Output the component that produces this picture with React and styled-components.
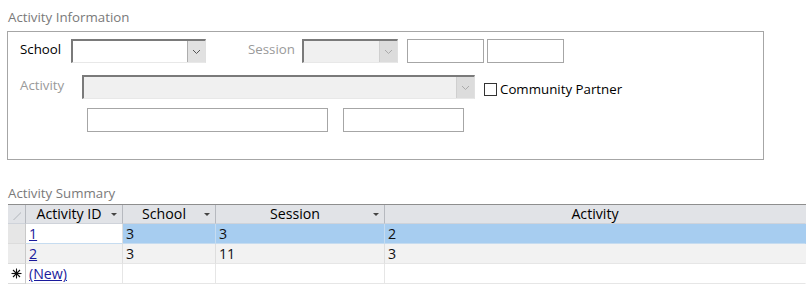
import React from "react";
import styled, { createGlobalStyle } from "styled-components";

const Global = createGlobalStyle`
  html, body { margin: 0; padding: 0; background: #fff; }
  body { font-family: "Open Sans", "Noto Sans", sans-serif; font-size: 13.3px; color: #000; }
  #root { width: 806px; height: 288px; overflow: hidden; }
`;

const Page = styled.div`
  display: flex;
  flex-direction: column;
  padding: 8px 0 0 0;
`;

const SectionTitle = styled.div`
  color: #7a7a7a;
  font-size: 13.3px;
  line-height: 18px;
  padding-left: 8px;
  height: 18px;
`;

const Frame = styled.div`
  margin: 5px 0 0 7px;
  width: 757px;
  height: 129px;
  border: 1px solid #a6a6a6;
  box-sizing: border-box;
  display: flex;
  flex-direction: column;
  padding: 7px 0 0 12px;
`;

const Row = styled.div`
  display: flex;
  align-items: center;
  height: 24px;
  margin-top: ${(p) => p.$mt || 0}px;
`;

const Label = styled.div`
  color: ${(p) => (p.$disabled ? "#9a9a9a" : "#000")};
  width: ${(p) => p.$w}px;
  margin-left: ${(p) => p.$ml || 0}px;
  line-height: 18px;
  padding-bottom: 4px;
`;

const Combo = styled.div`
  display: flex;
  width: ${(p) => p.$w}px;
  height: 24px;
  box-sizing: border-box;
  background: ${(p) => (p.$disabled ? "#f0f0f0" : "#fff")};
  border-top: 2px solid #7a7a7a;
  border-left: 2px solid #7a7a7a;
  border-right: 1px solid #e0e0e0;
  border-bottom: 1px solid #e8e8e8;
  margin-left: ${(p) => p.$ml || 0}px;
`;

const ComboField = styled.div`
  flex: 1;
`;

const DropButton = styled.div`
  width: 17px;
  background: ${(p) => (p.$disabled ? "#dcdcdc" : "#e1e1e1")};
  border-left: 1px solid ${(p) => (p.$disabled ? "#cfcfcf" : "#adadad")};
  display: flex;
  align-items: center;
  justify-content: center;
  svg { display: block; }
`;

const TextBox = styled.div`
  width: ${(p) => p.$w}px;
  height: 24px;
  box-sizing: border-box;
  border: 1px solid #a6a6a6;
  background: #fff;
  margin-left: ${(p) => p.$ml || 0}px;
`;

const CheckLabel = styled.label`
  display: flex;
  align-items: center;
  margin-left: 9px;
  margin-top: 4px;
  font-size: 13.3px;
  color: #000;
  gap: 3px;
`;

const Box = styled.span`
  width: 11px;
  height: 11px;
  border: 1px solid #333;
  background: #fff;
  display: inline-block;
`;

const SummaryTitle = styled(SectionTitle)`
  margin-top: 25px;
  height: 19px;
  line-height: 17px;
`;

const Grid = styled.div`
  margin-left: 8px;
  display: grid;
  grid-template-columns: 18px 97px 93px 169px 1fr;
  border-top: 1px solid #8e8e8e;
  font-size: 14.2px;
`;

const HeadCell = styled.div`
  height: 18px;
  background: #e1e3e7;
  border-right: 1px solid ${(p) => (p.$last ? "#e1e3e7" : "#b6b9bf")};
  border-bottom: 1px solid #cfd3da;
  display: flex;
  align-items: center;
  justify-content: center;
  padding-right: ${(p) => (p.$sort ? 10 : 0)}px;
  position: relative;
  line-height: 18px;
`;

const SortArrow = styled.span`
  position: absolute;
  right: 5px;
  top: 8px;
  width: 0;
  height: 0;
  border-left: 3px solid transparent;
  border-right: 3px solid transparent;
  border-top: 3px solid #444;
`;

const Corner = styled.span`
  position: absolute;
  right: 4px;
  bottom: 3px;
  width: 8px;
  height: 8px;
  background: linear-gradient(135deg, transparent 50%, #c9ccd1 50%, #c9ccd1 60%, transparent 60%);
`;

const Selector = styled.div`
  height: 19px;
  background: ${(p) => p.$bg};
  border-right: 1px solid #c9c9c9;
  border-bottom: 1px solid #dcdcdc;
  display: flex;
  align-items: center;
  justify-content: center;
  svg { display: block; }
`;

const Cell = styled.div`
  height: 19px;
  background: ${(p) => p.$bg};
  border-right: 1px solid ${(p) => (p.$last ? "transparent" : p.$line)};
  border-bottom: 1px solid ${(p) => p.$hline};
  padding-left: 3px;
  line-height: 19px;
  color: #111;
`;

const Link = styled.a`
  color: #1a1a9c;
  text-decoration: underline;
  cursor: pointer;
`;

const Chevron = ({ color }) => (
  <svg width="9" height="6" viewBox="0 0 9 6">
    <path d="M1 1 L4.5 4.5 L8 1" fill="none" stroke={color} strokeWidth="1" />
  </svg>
);

const NewMark = () => (
  <svg width="11" height="11" viewBox="0 0 11 11">
    <g stroke="#111" strokeWidth="1.1">
      <path d="M0.5 5.5 H10.5" />
      <path d="M5.5 0.5 V10.5" />
      <path d="M2 2 L9 9" />
      <path d="M9 2 L2 9" />
    </g>
  </svg>
);

const rows = [
  { id: "1", school: "3", session: "3", activity: "2", selected: true },
  { id: "2", school: "3", session: "11", activity: "3" },
];

export default function App() {
  return (
    <>
      <Global />
      <Page>
        <SectionTitle>Activity Information</SectionTitle>
        <Frame>
          <Row>
            <Label $w={51}>School</Label>
            <Combo $w={135}>
              <ComboField />
              <DropButton>
                <Chevron color="#555" />
              </DropButton>
            </Combo>
            <Label $disabled $w={54} $ml={42}>Session</Label>
            <Combo $w={96} $disabled>
              <ComboField />
              <DropButton $disabled>
                <Chevron color="#aaa" />
              </DropButton>
            </Combo>
            <TextBox $w={77} $ml={9} />
            <TextBox $w={77} $ml={3} />
          </Row>
          <Row $mt={12}>
            <Label $disabled $w={62}>Activity</Label>
            <Combo $w={393} $disabled>
              <ComboField />
              <DropButton $disabled>
                <Chevron color="#aaa" />
              </DropButton>
            </Combo>
            <CheckLabel>
              <Box />
              Community Partner
            </CheckLabel>
          </Row>
          <Row $mt={9}>
            <TextBox $w={241} $ml={67} />
            <TextBox $w={121} $ml={15} />
          </Row>
        </Frame>
        <SummaryTitle>Activity Summary</SummaryTitle>
        <Grid>
          <HeadCell><Corner /></HeadCell>
          <HeadCell $sort>Activity ID<SortArrow /></HeadCell>
          <HeadCell $sort>School<SortArrow /></HeadCell>
          <HeadCell $sort>Session<SortArrow /></HeadCell>
          <HeadCell $last>Activity</HeadCell>
          {rows.map((r, i) => {
            const bg = r.selected ? "#a7cdf0" : i % 2 ? "#f2f2f2" : "#fff";
            const line = r.selected ? "#c6dcf0" : "#dedede";
            const hline = r.selected ? "#c6dcf0" : "#e6e6e6";
            return (
              <React.Fragment key={r.id}>
                <Selector $bg={r.selected ? "#e6e6e6" : "#ececec"} />
                <Cell $bg={r.selected ? "#fff" : bg} $line="#dedede" $hline={hline}>
                  <Link>{r.id}</Link>
                </Cell>
                <Cell $bg={bg} $line={line} $hline={hline}>{r.school}</Cell>
                <Cell $bg={bg} $line={line} $hline={hline}>{r.session}</Cell>
                <Cell $bg={bg} $line={line} $hline={hline} $last>{r.activity}</Cell>
              </React.Fragment>
            );
          })}
          <Selector $bg="#fff"><NewMark /></Selector>
          <Cell $bg="#fff" $line="#e6e6e6" $hline="#e6e6e6"><Link>(New)</Link></Cell>
          <Cell $bg="#fff" $line="#e6e6e6" $hline="#e6e6e6" />
          <Cell $bg="#fff" $line="#e6e6e6" $hline="#e6e6e6" />
          <Cell $bg="#fff" $line="#e6e6e6" $hline="#e6e6e6" $last />
        </Grid>
      </Page>
    </>
  );
}
